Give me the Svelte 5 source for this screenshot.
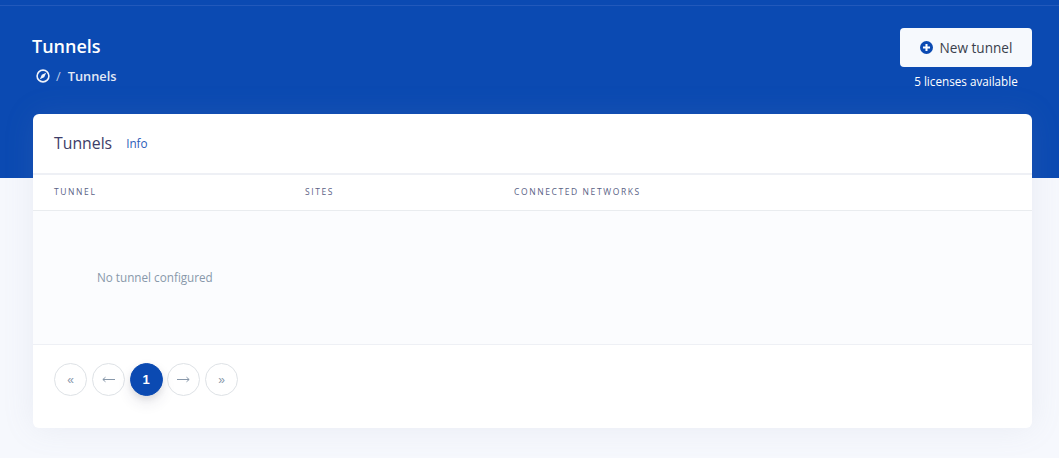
<script>
  const columns = ['Tunnel', 'Sites', 'Connected networks'];
</script>

<div class="page">
  <header class="hero">
    <div class="hero-inner">
      <div>
        <h1>Tunnels</h1>
        <nav class="crumbs">
          <svg class="compass" viewBox="0 0 14 14" width="14" height="14" aria-hidden="true">
            <circle cx="7" cy="7" r="5.9" fill="none" stroke="currentColor" stroke-width="1.6" />
            <path d="M10.2 3.8 L8.2 8.2 L3.8 10.2 L5.8 5.8 Z" fill="currentColor" />
          </svg>
          <span class="sep">/</span>
          <span class="crumb">Tunnels</span>
        </nav>
      </div>
      <div class="action">
        <button class="new">
          <svg viewBox="0 0 14 14" width="13" height="13" aria-hidden="true">
            <circle cx="7" cy="7" r="7" fill="#0b4ab2" />
            <path d="M7 3.2 V10.8 M3.2 7 H10.8" stroke="#fff" stroke-width="2.2" />
          </svg>
          New tunnel
        </button>
        <div class="licenses">5 licenses available</div>
      </div>
    </div>
  </header>

  <main class="card">
    <div class="card-head">
      <h2>Tunnels</h2>
      <a href="#info">Info</a>
    </div>
    <div class="thead">
      {#each columns as c}
        <div>{c}</div>
      {/each}
    </div>
    <div class="empty">No tunnel configured</div>
    <div class="pager">
      <span class="pg">«</span>
      <span class="pg">
        <svg viewBox="0 0 13 7" width="13" height="7" aria-hidden="true">
          <path d="M13 3.5 H1 M3.5 1.2 L0.8 3.5 L3.5 5.8" fill="none" stroke="#8898aa" stroke-width="1" />
        </svg>
      </span>
      <span class="pg active">1</span>
      <span class="pg">
        <svg viewBox="0 0 13 7" width="13" height="7" aria-hidden="true">
          <path d="M0 3.5 H12 M9.5 1.2 L12.2 3.5 L9.5 5.8" fill="none" stroke="#8898aa" stroke-width="1" />
        </svg>
      </span>
      <span class="pg">»</span>
    </div>
  </main>
</div>

<style>
  :global(body) {
    margin: 0;
    background: #f6f8fd;
    font-family: "Open Sans", sans-serif;
  }
  .page {
    height: 458px;
    overflow: hidden;
  }
  .hero {
    height: 178px;
    box-sizing: border-box;
    background: #0b4ab2;
    padding-top: 5px;
  }
  .hero-inner {
    border-top: 1px solid #2259bb;
    padding: 22px 27px 0 32px;
    display: flex;
    justify-content: space-between;
    align-items: flex-start;
  }
  h1 {
    margin: 5px 0 0;
    font-size: 18px;
    line-height: 26px;
    font-weight: 600;
    color: #fff;
  }
  .crumbs {
    display: flex;
    align-items: center;
    margin-top: 8px;
    padding-left: 4px;
    color: #e3e9f6;
    font-size: 12.8px;
    line-height: 18px;
  }
  .compass {
    color: #f0f3fa;
  }
  .sep {
    margin: 0 7px 0 6px;
    color: #b9c8e6;
  }
  .crumb {
    font-weight: 600;
  }
  .action {
    display: flex;
    flex-direction: column;
    align-items: center;
  }
  .new {
    width: 132px;
    height: 39px;
    border: 0;
    border-radius: 4px;
    background: #f6f9fd;
    color: #3a3f4c;
    font-family: inherit;
    font-size: 13.6px;
    font-weight: 400;
    display: flex;
    align-items: center;
    justify-content: center;
    gap: 7px;
    padding: 0;
  }
  .licenses {
    margin-top: 5px;
    color: #fff;
    font-size: 11.7px;
    line-height: 18px;
  }
  .card {
    margin: -64px 27px 0 33px;
    height: 314px;
    position: relative;
    background: #fff;
    border-radius: 6px;
    box-shadow: 0 0 32px rgba(136, 152, 170, 0.12);
    display: flex;
    flex-direction: column;
  }
  .card-head {
    height: 61px;
    box-sizing: border-box;
    padding: 0 21px 2px;
    display: flex;
    align-items: center;
    gap: 14px;
    border-bottom: 2px solid #eef0f5;
  }
  h2 {
    margin: 0;
    font-size: 15.8px;
    font-weight: 400;
    color: #3d3d68;
  }
  .card-head a {
    color: #2a5bb8;
    font-size: 11.7px;
    text-decoration: none;
  }
  .thead {
    height: 36px;
    box-sizing: border-box;
    border-bottom: 1px solid #e9ecef;
    padding: 0 0 3px 21px;
    display: grid;
    grid-template-columns: 251px 209px 1fr;
    align-items: center;
    font-size: 8.5px;
    letter-spacing: 1.6px;
    text-transform: uppercase;
    color: #5a6285;
  }
  .empty {
    height: 134px;
    box-sizing: border-box;
    background: #fbfcfe;
    border-bottom: 1px solid #eef0f5;
    padding: 0 0 2px 64px;
    display: flex;
    align-items: center;
    font-size: 11.7px;
    color: #8898aa;
  }
  .pager {
    display: flex;
    gap: 4.75px;
    padding: 18px 21px 0;
  }
  .pg {
    width: 33px;
    height: 33px;
    box-sizing: border-box;
    border: 1px solid #dee2e6;
    border-radius: 50%;
    display: flex;
    align-items: center;
    justify-content: center;
    color: #8898aa;
    font-size: 12px;
    font-family: "Liberation Sans", sans-serif;
  }
  .active {
    background: #0b4ab2;
    border-color: #0b4ab2;
    color: #fff;
    font-weight: 700;
    font-size: 13px;
    box-shadow: 0 7px 14px rgba(50, 50, 93, 0.1), 0 3px 6px rgba(0, 0, 0, 0.08);
  }
</style>
